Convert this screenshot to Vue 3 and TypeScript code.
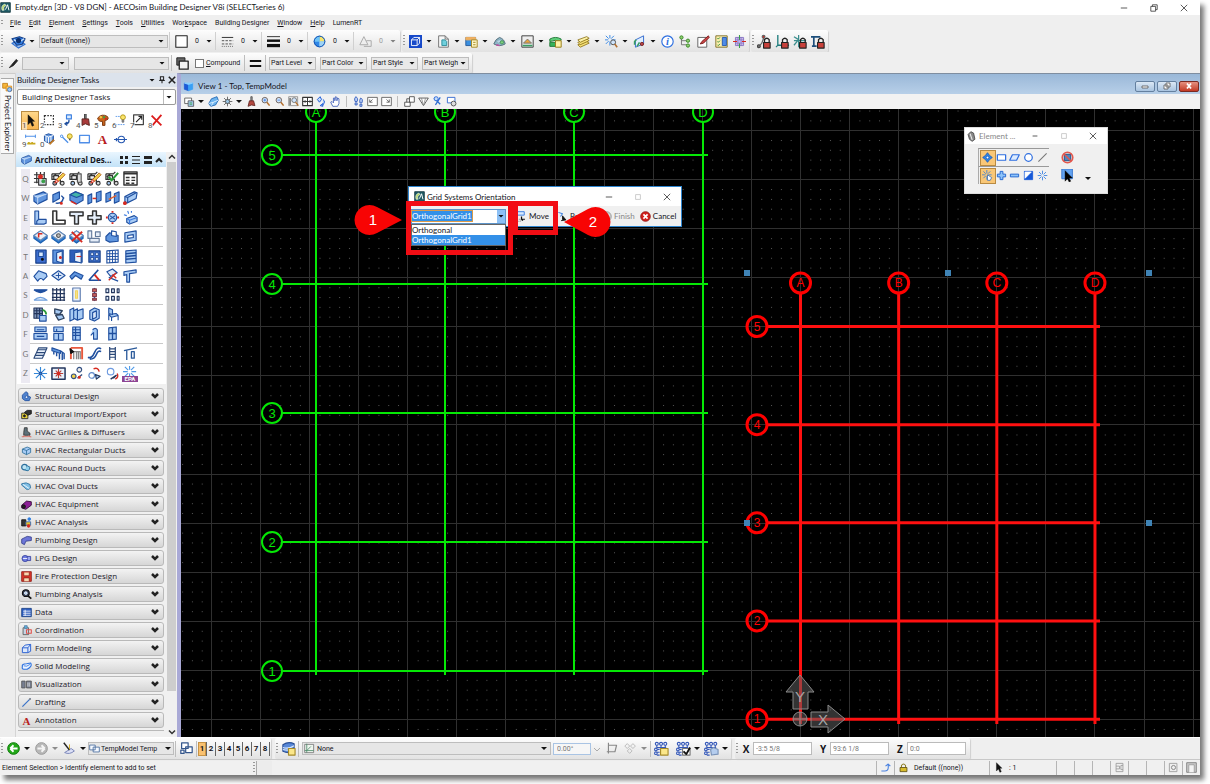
<script setup lang="ts">
import { h } from 'vue'

const B = '#1f4f9f'
const L = '#a8cbf4'
const M = '#5f95de'
const K = '#333333'
const R = '#d62a20'
const G = '#3aa04a'
const Y = '#f3d34a'

const p = (d: string, f = 'none', s = B, w = 1.2) =>
  `<path d="${d}" fill="${f}" stroke="${s}" stroke-width="${w}" stroke-linejoin="round"/>`
const c = (x: number, y: number, r: number, f = 'none', s = B, w = 1.2) =>
  `<circle cx="${x}" cy="${y}" r="${r}" fill="${f}" stroke="${s}" stroke-width="${w}"/>`
const gridMarks = p('M1 4H12M1 8H12M1 12H12M4 1V13M8 1V13M12 1V13', 'none', K, 1.3)
const pencil = p('M4 13L6 9 13 2 15 4 8 11Z', Y, '#b5641d', 1) + p('M4 13L6 9 8 11Z', '#fff', R, 1)
const burst = (s: string, x = 8, y = 8) =>
  `<g transform="translate(${x - 8} ${y - 8})">` +
  p('M8 1V6M8 10V15M1 8H6M10 8H15M3 3L6.5 6.5M9.5 9.5L13 13M13 3L9.5 6.5M6.5 9.5L3 13', 'none', s, 1.2) + '</g>'
const lock = p('M8 9V6Q10.500 3 13 6V9', 'none', '#222', 1.4) + p('M7 9H14V15H7Z', '#c8403a', '#222', 1.2)
const lens = c(7, 6, 4, '#cfe4fb', '#6a5b55', 1.3) + p('M10 9L14 14', 'none', '#b3702f', 2.2)
const cut = p('M1 3H9L11 1M2 6L6 3M1 3V9H10V14M3 9V5H8V9', '#f0f0f0', K, 1.3) + c(4, 13, 2, L, K) + c(12, 13, 2, '#ddd', K)
const wall = p('M1 6L11 2 15 4V10L5 15 1 12Z', M) + p('M1 6L5 8 15 4M5 8V15', L, '#dceafc', 0.8)
const duct = p('M2 6L9 3 14 5V11L8 14 2 11Z', L, '#2d6f9c') + p('M2 6L8 8 14 5M8 8V14', 'none', '#2d6f9c')
const plate = p('M1 7L8 2 15 7V10L8 15 1 10Z', '#2b7ad0', '#1d5fae') + p('M1 7L8 2 15 7 8 12Z', '#eef3fa', '#6e8fb8')
const chain = c(3, 3, 1.6, '#fff', '#3558b8') + c(7.500, 3, 1.6, '#fff', '#3558b8') + c(12, 3, 1.6, '#fff', '#3558b8') +
  p('M3 5V7H13M7.500 5V7M12 5V7M3 9H6M3 12H6M3 15H6', 'none', '#3558b8') + c(2, 9, 1.4, '#fff', '#3558b8') +
  c(2, 13, 1.4, '#fff', '#3558b8')

const ICONS: Record<string, string> = {
  app: p('M1 1H15V15H1Z', '#1f5c66', '#15383f') + p('M3 12Q1 5 7 3L9 5Q4 7 6 12Z', '#b5d66a', '#fff', 0.8) + p('M8 11L11 4 13 12', 'none', '#fff', 1.4),
  level: p('M1 10L8 15 15 11 8 7Z', '#9fc3f2', '#2f6fd0') + p('M1 5L9 3 15 5 12 11 6 12Z', '#2f7be0', '#173f86') + p('M3 6L8 9 14 5', 'none', '#cfe4fb', 1.4) + c(8, 7, 2.200, '#0b2f6d', '#0b2f6d'),
  square: p('M1 1H15V15H1Z', '#fff', '#222', 1.3),
  style: p('M1 3H15', 'none', K, 1.2) + '<path d="M1 7H15M1 11H15" stroke="#333" stroke-dasharray="3 1.500"/>' + '<path d="M1 14H15" stroke="#333" stroke-dasharray="1 1.500"/>',
  weight: '<path d="M0 2H16" stroke="#111"/><path d="M0 7H16" stroke="#111" stroke-width="3"/><path d="M0 13H16" stroke="#111" stroke-width="4"/>',
  globe: c(8, 8, 6.500, '#2f86e6', '#1558b8') + p('M8 8V1.500A6.500 6.500 0 0 1 14.500 8Z', '#f6e36a', '#f6e36a', 0.5) + p('M8 8H14.500A6.500 6.500 0 0 1 8 14.500Z', '#9ed3f6', '#9ed3f6', 0.5) + p('M8 8H1.500A6.500 6.500 0 0 1 8 1.500Z', '#6fc3f6', '#6fc3f6', 0.5) + c(8, 8, 6.500, 'none', '#1558b8', 1.2),
  shape: p('M1 12L6 2 11 12Z', '#eee', '#aaa') + p('M6 14H15V7H9', 'none', '#aaa'),
  cube: p('M0 0H16V16H0Z', '#1749c9', '#1749c9') + p('M3 6H10V13H3ZM3 6L6 3H13V10L10 13M10 6L13 3', 'none', '#fff', 1.1),
  page: p('M2 1H10L14 5V15H2Z', '#f7f7f7', '#777') + p('M6 6H10L12 8V13H6Z', '#6fd0dd', '#2f8e9c') + p('M10 1V5H14', 'none', '#777'),
  views: p('M1 3H13V13H1Z', '#3a8fe0', '#2c5f9e') + p('M1 3H13V6H1Z', '#f0b060', '#f0b060') + p('M8 6H15V15H8Z', '#fff8c8', '#a58a2a') + p('M10 9H13M10 12H13', 'none', '#a58a2a'),
  solid: p('M1 11Q3 5 8 3Q14 5 15 11Q8 15 1 11Z', '#8fb6c8', '#55707c') + p('M4 8Q8 4 11 7L7 10Z', '#b4d4e4', '#7d9cab', 0.6) + p('M4 12L8 13', 'none', '#c04ca0', 1.6) + c(11, 9, 2, '#7fd07f', '#4b9a5b'),
  raster: p('M1 1H15V15H1Z', '#eee', '#444') + p('M3 10L8 5 13 10H3Z', '#e9a33a', '#777') + p('M2 13H14', 'none', '#3a9d63', 2),
  cloud: p('M1 5Q8 1 15 5L14 8Q8 5 1 8Z', '#5fd07a', '#247a3a') + p('M1 9H10V14H1Z', '#36b35a', '#247a3a') + p('M8 7H15V15H8Z', '#fff3a8', '#9a7e1d'),
  layers: p('M1 12L12 8 15 10 4 15Z', '#f7e27a', '#8a7015', 1) + p('M1 9L12 5 15 7 4 12Z', '#f7e27a', '#8a7015', 1) + p('M1 6L12 2 15 4 4 9Z', '#fdf2a8', '#8a7015', 1),
  sparkLens: burst('#3c8be6', 6, 6) + c(10, 9, 3, '#cfe4fb', '#555') + p('M12 11L15 15', 'none', '#b3702f', 2),
  fence: p('M3 6L13 1V11L3 15Z', '#e1effe', '#3a6fd0') + p('M2 12V8L4 6M5 14L8 9', 'none', '#3a9d63', 2) + c(11, 11, 2, '#b8484a', '#7d2a2a'),
  info: c(8, 8, 7, '#fff', '#2d6fe0', 1.4) + '<text x="8" y="12.500" text-anchor="middle" font-family="Liberation Serif, serif" font-style="italic" font-weight="bold" font-size="13" fill="#2d6fe0">i</text>',
  tree: p('M3 4V12H10M3 7H9', 'none', '#777') + c(3, 3, 2, '#8fd070', '#3d8a2a') + c(11, 7, 2, '#8fd070', '#3d8a2a') + c(11, 13, 2, '#8fd070', '#3d8a2a'),
  markup: p('M1 3H12V15H1Z', '#fff', '#666') + p('M4 11L6 8 14 1 15 3 8 10Z', '#d04848', '#7d1f1f'),
  props: p('M1 1H15V15H1Z', '#fdf0ad', '#867531') + p('M9 3H14V13H9Z', '#4f8ce8', '#2a5bb0') + p('M3 4L4 5 6 3M3 8L4 9 6 7M3 12L4 13 6 11', 'none', '#2d8a3a'),
  snapgrid: p('M3 3H13V13H3Z', '#c9b8ee', '#8d7bc4') + p('M8 0V6M8 10V16', 'none', '#3aa04a', 1.3) + p('M0 8H5M11 8H16', 'none', R, 1.5) + p('M3 6H13M3 10H13M6 3V13M10 3V13', 'none', '#7a68b8', 0.7),
  lockA: p('M1 14L5 10M8 2L5 10', 'none', '#666', 1.4) + c(2, 13, 1.500, '#777', '#444') + c(7, 3, 1.500, R, '#666') + lock,
  lockB: p('M3 1V12H15', 'none', '#1d7c7c', 1.4) + p('M1 14L3 12', 'none', '#1d7c7c') + lock,
  lockC: p('M1 3L6 6M1 12L6 6M6 1V14M1 7H14', 'none', '#3a8d8d', 1.3) + lock,
  lockD: p('M0 3H10M3 3V13M1 13H6', 'none', '#1d4f7c', 1.8) + lock,
  pen: p('M2 14L6 9 12 2 14 4 8 11Z', '#222', '#222'),
  stack: p('M1 1H11V10H1Z', '#666', '#222') + p('M4 5H15V15H4Z', '#f1f1f1', '#222', 1.600),
  equal: '<path d="M1 5H15M1 11H15" stroke="#111" stroke-width="2.500"/>',
  viewIcon: p('M2 3L8 5V14L2 12Z', '#1c5bd6', '#1c5bd6') + p('M8 5L14 3V12L8 14Z', '#39a0f5', '#39a0f5') + p('M2 3H14L8 5Z', '#8ad0ff', '#8ad0ff'),
  vAttr: p('M1 3H11V11H1Z', '#fff', '#555') + p('M6 7H14V15H6Z', '#a8cbf4', '#555') + p('M8 10H12M8 12H12', 'none', G),
  vDisp: p('M1 11L5 4 13 1 15 6 11 13 4 15Z', '#6db4ee', '#1c62b0') + p('M1 11L8 9 15 6M8 9L5 14', 'none', '#e7f4ff'),
  sun: burst('#555') + c(8, 8, 3, '#9dc8e6', '#444'),
  brush: p('M7 1H9V7H7Z', '#999', '#555') + p('M5 7H11L13 14 8 13 3 15Z', '#b3483f', '#5d2622'),
  zoomIn: lens + p('M5 6H9M7 4V8', 'none', '#2d6fe0', 1),
  zoomOut: lens + p('M5 6H9', 'none', '#2d6fe0', 1),
  zoomWin: p('M1 1H14V14H1Z', 'none', '#777', 1) + c(9, 6, 3.500, '#cfe4fb', '#666') + p('M11 9L15 14', 'none', '#b3702f', 2) + p('M3 3V13', 'none', K, 1.5),
  fit: p('M1 2H15V14H1Z', '#fff', K, 1.6) + p('M1 8H15M8 2V14', 'none', K, 1.4) + p('M5 6L3 8 5 10M11 6L13 8 11 10', 'none', K),
  rotate: p('M6 1L2 5 5 9 8 5ZM10 5Q15 8 9 14M6 14L10 11V15Z', '#c5ddfa', '#1c5bd6', 1.4),
  hand: p('M4 15L1 9 3 8 5 10V3L7 3V7L8 1 10 2V7L11 3 13 4V11L11 15Z', '#fff', '#3b5bb8'),
  walk: p('M4 1Q8 3 6 8H3Q1 4 4 1ZM3 10H6V13H3ZM11 3Q15 4 13 10H10Q9 6 11 3ZM10 12H13V15H10Z', '#bcd0f6', '#2b55b8'),
  prev: p('M1 2H15V14H1Z', '#fff', '#555') + p('M4 5V9H8M4 9L8 5', 'none', '#555'),
  next: p('M1 2H15V14H1Z', '#fff', '#555') + p('M12 5V9H8M12 9L8 5', 'none', '#555'),
  copyview: p('M8 1H15V9H8ZM1 9H9V15H1Z', '#fff', '#444') + p('M4 9V4H8', 'none', '#444'),
  clip: p('M1 3H15L8 14Z', '#fff', '#444') + p('M5 3L8 14 11 3', 'none', '#888'),
  clipRun: p('M3 3L12 12M12 2L5 13', 'none', '#2b6bd0', 1.800) + c(6, 4, 3, '#c5ddfa', '#1c5bd6'),
  clipSet: p('M2 2H13V10H2Z', '#fff', '#3b6fd0', 1.4) + c(11, 11, 3.500, '#ddd', '#444'),
  arrow: p('M5 1V13L8 10 10 15 12 14 10 9H13Z', '#111', '#111', 0.6),
  marquee: '<path d="M3 2H14V13H3Z" fill="none" stroke="#333" stroke-width="1.500" stroke-dasharray="2 1.500"/>',
  manip: p('M8 1H14V6H8Z', '#d9ebff', '#3b7fe0', 1.4) + p('M11 7V9Q11 12 7 12M9 10L6 12 9 14', 'none', '#1f4f9f', 1.6),
  moveTo: p('M1 1H12V6H1Z', '#d9ebff', '#3b7fe0', 1.4) + p('M8 8V12H13M10 14L8 12', 'none', '#111', 1.8) + '<path d="M1 12H7V15H1Z" fill="none" stroke="#777" stroke-dasharray="2 1"/>',
  brush2: p('M8 0H10V6H8Z', '#888', '#444') + p('M5 6H13L14 14 9 12 5 14Z', '#a83a3a', '#5d2622'),
  palette: p('M2 5Q7 -1 14 3Q17 7 11 8V14H8V9Q3 10 2 5Z', '#c8641d', '#7d3b10') + c(6, 4, 1, Y, Y) + c(10, 4, 1, G, G) + c(12, 6, 1, R, R),
  bulb: '<path d="M2 3H7M2 13H7M8 13H14" stroke="#4a8ee8" stroke-dasharray="2 1"/>' + c(11, 4, 3, '#fbe46a', '#b59a1d') + p('M10 7V10H12V7', '#777', '#777'),
  scale: p('M2 1H14V13H2Z', '#fff', '#444', 1.5) + p('M5 10L12 3M8 3H12V7', 'none', '#222', 1.4),
  del: p('M2 2L14 14M14 1L3 14', 'none', '#dc1c1c', 2.2),
  measure: p('M2 4H14M2 2V6M14 2V6', 'none', '#4a8ee8') + p('M4 13H14M6 11V13M10 11V13', 'none', '#c8a81d', 2),
  modify: p('M3 3L8 1 14 3V10L8 12 3 10Z', M) + p('M3 3L8 5 14 3M8 5V12M5 5V11M11 4V11', 'none', '#fff') + p('M9 13L14 8 15 9 10 14Z', '#e79b2c', '#a35d12'),
  line: p('M2 4L10 12', 'none', '#4a8ee8', 1.500) + c(2, 4, 1.500, '#fff', '#4a8ee8') + c(12, 4, 3, '#fbe46a', '#b59a1d') + p('M11 8H13', 'none', '#555', 2),
  rect: p('M2 3H14V12H2Z', '#fff', '#4f8ee8', 1.6),
  letterA: '<text x="8" y="14" text-anchor="middle" font-family="Liberation Serif, serif" font-weight="bold" font-size="16" fill="#b8201d">A</text>',
  dim: c(9, 8, 4, '#fff', '#2456b0', 1.4) + p('M0 8H16M3 6V10', 'none', '#2456b0', 1.4),
  ac1: gridMarks + p('M6 8H14V15H6Z', '#d8dde6', K) + c(8, 6, 2, R, R) + c(11, 11, 1.5, G, G), ac2: cut + pencil, ac3: cut + p('M9 3H13V12H9Z', '#ddd', '#555'),
  ac4: cut + pencil, ac5: cut + p('M4 6L7 10 14 2', 'none', '#2b9a38', 2.2),
  ac6: p('M1 1H15V15H1Z', '#fff', K, 1.5) + p('M1 3H15M3 7H7M9 7H13M3 10H7M9 10H13M3 13H7M9 13H12', 'none', K, 1.5),
  w1: wall, w2: p('M2 5L9 2V9L2 13Z', M) + p('M5 14Q12 15 13 9M11 6L14 9', 'none', B, 1.5) + c(11, 14, 1, R, R),
  w3: p('M1 5L7 2 15 5V11L8 15 1 11Z', M) + p('M1 5L8 8 15 5 7 2Z', '#43b4a9', '#1f4f9f') + p('M2 12L8 15', 'none', R, 1.5),
  w4: p('M1 6L5 4V13L1 15ZM10 3L15 1V11L10 13Z', M) + p('M6 9H10', 'none', R, 1.6),
  w5: p('M1 4L6 2V11L1 13ZM10 4L15 2V12L10 14Z', M) + p('M4 10L12 6', 'none', '#e2602c', 1.500),
  w6: p('M2 7L12 2 15 3 14 9 4 14 2 12Z', L) + p('M2 7L5 8 14 3M5 8L5 13', 'none', B) + c(2, 14, 1.4, R, R),
  e1: p('M2 1H6V10H14V14L12 15H2Z', L) + p('M6 10L4 12V15', 'none', B), e2: p('M2 1H6V11H15V15H2Z', '#fff', K, 1.7),
  e3: p('M1 2H15V6H10V15H6V6H1Z', '#e5effb', K, 1.6), e4: p('M6 1H10V6H15V10H10V15H6V10H1V6H6Z', '#e5effb', K, 1.6),
  e5: c(8, 8, 4.500, L, B) + p('M5 6L11 10M5 10L11 6', 'none', B) + p('M8 1V3M8 13V15M1 8H3M13 8H15', 'none', R, 2),
  e6: p('M4 9L12 6 15 8V12L7 15 4 13Z', L) + p('M4 9L7 11 15 8M7 11V15M1 5L4 6M5 1L6 4M9 1V3', 'none', '#3b7be0', 1.2),
  r1: plate + p('M6 9V5H10', 'none', R, 1.6), r2: plate + c(8, 7, 2, '#bbb', '#555'), r3: plate + p('M3 3L14 14M14 3L3 13', 'none', R, 2),
  r4: p('M1 2H5V10H1ZM9 3H14V8H9ZM3 10H13V14H3Z', '#e5edf8', '#637a9c'),
  r5: p('M1 8L5 4 14 7V13L5 14 1 12Z', M) + p('M7 2L12 3V8L7 7Z', '#fff'), r6: p('M2 4L14 2V12L2 14Z', L) + p('M5 7L11 6V9L5 10Z', '#fff'),
  t1: p('M3 1H14V15H3Z', '#3d6fd0', '#173f86') + p('M6 3H11V8H6Z', '#d9e9fc') + c(10, 11, 1, '#111', '#111'),
  t2: p('M2 1H13V15H2Z', M) + p('M6 4L12 2V15L6 13Z', '#eaf2fc') + c(10, 9, 1, R, R), t3: p('M1 1H14V14H1Z', '#2c5cb8') + p('M6 4L13 3V15L6 13Z', '#eaf2fc') + p('M8 8H13', 'none', R),
  t4: p('M2 2H14V14H2Z', '#3f74d4', '#173f86') + p('M4 4H7V7H4ZM9 4H12V7H9ZM4 9H7V12H4ZM9 9H12V12H9Z', '#e0ecfb', '#173f86', 0.8),
  t5: p('M2 2L14 1V14L2 15Z', '#fff') + p('M2 5H14M2 8H14M2 11H14M5 2V15M8 2V15M11 2V15', 'none', B, 1),
  t6: p('M3 2L14 1V14L3 15Z', L) + p('M3 5L14 4M3 8L14 7M3 11L14 10', 'none', B, 1.5),
  a1: p('M1 9L6 3 14 6 15 9 11 13Q8 9 5 14Z', L), a2: p('M1 8L8 3 15 8 8 13Z', '#dce9fa') + p('M5 8H11M8 5V11', 'none', B, 1),
  a3: p('M1 9L6 4 15 8 13 12 7 8 3 12Z', M), a4: p('M2 13L12 2M2 13H15', 'none', B, 1.6) + p('M8 7L13 13', 'none', R, 2),
  a5: p('M2 4L8 1 13 5 6 9ZM4 10L14 14', '#dce9fa') + p('M8 7L12 11M12 5L4 13', 'none', R, 1.5), a6: p('M1 4L14 2V5L7 6V15H4V7L1 8Z', L),
  s1: p('M1 3H15Q8 9 1 3', B) + p('M1 14H15Q8 8 1 14', '#e9f2fc', '#6f9fdc'), s2: p('M2 1V15M6 1V15M10 1V15M14 1V15M1 3H15M1 7H15M1 11H15M1 14H15', 'none', '#24365c', 1.3),
  s3: p('M4 1H12V15H4Z', '#e8f0fb', '#5f7cb0') + p('M7 4H9V12H7Z', '#f9e79a', '#f0d460'), s4: p('M8 1V15', 'none', B, 1.5) + p('M6 2H10V5H6ZM6 7H10V10H6ZM6 12H10V14H6Z', '#d96a5e', '#7f3a4a'),
  s5: p('M1 2H4V6H1ZM7 2H10V6H7ZM13 2H15V6H13ZM1 10H4V14H1ZM7 10H10V14H7ZM13 10H15V14H13Z', '#dce9fa', '#24365c'),
  d1: p('M1 1H10V12H1Z', '#7d93b8', '#24365c') + p('M1 4H10M1 7H10M4 1V12M7 1V12', 'none', '#24365c') + p('M7 9H14V15H7Z', L) + p('M10 3Q14 4 14 8', 'none', '#2b9a38', 2), d2: p('M4 2L12 4 9 8 4 7ZM5 9L12 8 14 12 8 14Z', L, '#30435f', 1.4),
  d3: p('M1 3L5 1V13L1 15ZM5 4L9 2V14L5 12ZM9 4L15 2V12L9 14Z', L), d4: p('M3 4L8 1 13 3V12L8 15 3 13Z', L) + p('M6 6L10 4V11L6 13Z', '#dceafc', B),
  d5: p('M4 1L8 3V8L4 7ZM4 8L12 7 14 9 7 11ZM4 8V14M14 9V14M7 11V15', L),
  f1: p('M2 1H14V6H2ZM1 8H15V14H1Z', L) + p('M4 4H12M4 11H12', 'none', B), f2: p('M3 1H13V6H3ZM3 8H13V15H3Z', L) + p('M8 8V15M6 3V6', 'none', B),
  f3: p('M4 1H12V15H4Z', L) + p('M4 4H12M4 7H12M4 10H12M7 1V15', 'none', B, 1.3), f4: p('M6 4Q9 1 11 4V14H7V7L4 10', L), f5: p('M4 2L12 1V14L4 15Z', L) + p('M8 2V14M4 8H12', 'none', B, 1.4),
  g1: p('M1 13L6 2H15L10 13Z', '#eaf2fc', '#2b4878') + p('M2 10H12M4 7H13M5 4H14', 'none', '#2b4878'), g2: p('M1 2L10 5V8L1 5Z', M) + p('M3 6V9M6 7V11M9 8V14M12 6V15M10 5L14 8V14', 'none', B, 1.5),
  g3: p('M2 2H14V14', 'none', '#e8583c', 2) + p('M2 2V14', 'none', '#e8583c', 2) + p('M5 6H12V14M5 6V14M8 6V14M10 6V14', 'none', '#888', 1.4) + p('M1 3L5 6 2 8Z', '#111', '#111'), g4: p('M1 12Q5 14 8 7T15 3M3 14Q8 14 10 9T15 6', 'none', B, 1.7),
  g5: p('M5 1V15M11 1V15M5 3H11M5 6H11M5 9H11M5 12H11', 'none', '#2b4878', 1.3), g6: p('M1 5L15 2M4 5V15M9 6H12V13H9Z', 'none', '#2b5a9a', 1.4),
  z1: burst('#2f86d8') + c(8, 8, 1.500, '#2f86d8'), z2: p('M1 2H15V14H1Z', '#e9f2fc', '#24365c', 1.6) + p('M8 3V13M3 8H13M5 5L11 11M11 5L5 11', 'none', '#b5423a') + c(8, 8, 1.500, R, R),
  z3: c(5, 11, 2.500, Y, '#334f80') + c(11, 4, 2.500, '#eee', '#334f80') + p('M9 13L14 9', 'none', '#334f80', 1.4) + c(11, 12, 1, R, R), z4: c(5, 10, 3, '#fff', '#5d86c8') + p('M9 9L14 11 10 14Z', L, '#24365c') + p('M7 3Q12 1 13 6', 'none', R, 1.5),
  z5: c(6, 6, 3.500, '#fff', '#6d9ae0') + p('M6 14L12 10 9 13', 'none', '#24365c', 1.5) + p('M13 8Q15 12 11 14', 'none', R, 1.5), z6: burst('#4f9ae8', 7, 6),
  a_arch: wall, a_sd: p('M2 6L7 1 10 3V7L14 9 12 14 6 14 2 11Z', '#4f83cf') + c(8, 9, 2, '#dceafc', B), a_sie: p('M1 6H10V14H1Z', '#e7d23a', '#222') + p('M5 5L9 2H15V7L10 9Z', '#333', '#111') + c(5, 10, 1.500, '#222', '#222'),
  a_hg: p('M5 1H9V6L13 9V12H4V8Z', '#5d7079', '#333') + p('M1 14H15M5 12L3 15M11 12L14 15', 'none', '#d8746a', 1.3), a_hr: duct, a_hro: c(5, 6, 4, '#bfe4f2', '#2d6f9c', 1.8) + p('M6 10Q12 14 13 6L9 4', '#8fd0ec', '#2d6f9c', 1.4),
  a_ho: p('M1 4Q8 1 13 5L14 10Q9 15 6 10L1 6Z', '#82c0e6', '#2d6f9c') + p('M3 5L12 11', 'none', '#fff'), a_he: p('M1 9L8 3 15 4V9L7 15 1 13Z', '#8c1f96', '#2d0932') + c(4, 11, 2.500, '#222', '#111'),
  a_ha: p('M1 4H7V13H1Z', '#333', '#111') + p('M7 7H14V12H7Z', '#e8c12c', '#2b62b8') + c(12, 3, 2, '#2f7fe0', '#2f7fe0') + c(11, 13, 2, R, R), a_pd: p('M1 6L9 2 15 3V8L7 9 5 14 1 12Z', '#6d76d8', '#333d8c'),
  a_lpg: c(6, 8, 4.500, '#6d7be0', '#333d9c') + p('M9 5H14V11H9Z', '#99a3f0', '#333d9c') + p('M3 8H9', 'none', '#fff'), a_fp: p('M1 1H15V15H1Z', '#e0382c', '#8c1710') + p('M4 2V7H12V2M4 15V10H12V15', '#f8d7b0', '#7d1710', 1),
  a_pa: c(7, 6, 5, '#333d54', '#111', 1.6) + c(7, 6, 2, '#9fc4ee', '#fff') + p('M10 10L15 14', 'none', '#111', 2.500), a_da: p('M1 2H15V14H1Z', '#2f5fc0', '#173f86') + p('M3 6H14M3 9H14M3 12H14M6 4V13', 'none', '#fff'),
  a_co: p('M3 4H11V14H3Z', '#c5d5e3', '#555') + p('M8 7H15V12H8Z', 'none', '#e0504a', 1.5) + p('M5 1H9V5H5Z', '#5ab0e0', '#5a7fa0'), a_fm: p('M2 7L6 3 14 2V12L10 14H2Z', '#dce9fc', '#2d62d0', 1.4) + p('M2 7H10V14M10 7L14 2', 'none', '#2d62d0', 1.4),
  a_sm: p('M2 8Q1 4 8 4L14 3Q17 8 9 12H4Q1 12 2 8Z', '#eaf3ff', '#2d72e0', 1.6) + p('M4 7Q8 9 13 5', 'none', '#2d72e0'), a_vi: p('M1 3H6V13H1ZM8 3H15V13H8Z', '#777f92', '#555') + p('M10 5V11M12 5V11', 'none', '#ddd'),
  a_dr: p('M2 14L14 2', 'none', '#3a73c8', 1.8) + c(13, 3, 1, '#888', '#888'), back: c(8, 8, 7.200, '#22a818', '#0f7a0c') + p('M4 8L8 4M4 8L8 12M4 8H13', 'none', '#fff', 2.200), fwd: c(8, 8, 7.200, '#b8b8b8', '#999') + p('M12 8L8 4M12 8L8 12M12 8H3', 'none', '#f4f4f4', 2.200),
  mode: p('M2 13Q8 16 14 11L10 8Z', '#dce0f6', '#7a86b8') + p('M1 1L8 10', 'none', '#222', 1.800) + p('M8 3V9', 'none', '#d6b22a'),
  model: p('M1 3H9V10H1ZM6 6H15V13H6Z', '#f5f9ff', '#456a9c', 1.2), windows: p('M2 1H10V8H2ZM7 6H15V13H7ZM1 10H5V14H1Z', '#fff', '#34568c', 1.5), db: p('M2 4Q8 0 14 3V11Q8 14 2 11Z', '#5788d8', '#2a4f94') + p('M2 7Q8 9 14 5M2 9Q8 11 14 8', 'none', '#dce9fa') + p('M8 8H15V15H8Z', '#fbe78a', '#a58a2a'),
  acs: p('M1 2H14V14H1Z', '#eef5ee', '#777') + p('M4 1V14M1 11H14M4 11L10 5', 'none', '#4c8a6a'), gray1: p('M3 1V14M3 4H13L11 12H1', 'none', '#888', 1.4), gray2: p('M4 2L7 5 4 8 1 5ZM11 2L14 5 11 8 8 5ZM7 8L10 11 7 14 4 11Z', 'none', '#bbb'),
  ch1: chain + p('M7 8H15V15H7Z', '#fbe78a', '#a58a2a'), ch2: chain + p('M7 8H15V15H7Z', '#fff', '#777') + p('M8 11L11 14 15 7', 'none', '#111', 2), ch3: chain + p('M7 9L10 7 15 9V14L8 15Z', '#b5cdee', '#7a93b8'),
  snap: p('M2 13H7Q12 13 12 8V4M8 6L12 3 15 6', 'none', '#4a82e0', 1.6), padlock: p('M5 8V5Q8 1 11 5V8', 'none', '#8a7a20', 1.5) + p('M3 8H13V14H3Z', '#d8bc2c', '#5c4c10'), doc: p('M3 2H13V14H3ZM3 6H8V10H3M13 5H10V11H13', 'none', '#999'), disk: p('M2 2H13V14H2Z', '#eee', '#999') + c(8, 8, 3, 'none', '#777'), person: p('M1 1H15V15H1Z', '#ccc', '#777') + p('M4 15V4H12V15', '#f3f3f3', '#999'),
  elem: p('M3 5L7 1 11 3 13 12 9 15 5 12Z', '#888', '#444') + p('M6 4L9 13', 'none', '#eee', 1.5), pAll: p('M8 1L11 5 15 8 11 11 8 15 5 11 1 8 5 5Z', '#2f86e6', '#1558b8') + c(8, 8, 2, '#fff', '#1558b8'), pRect: p('M2 4H14V12H2Z', '#fff', '#2f6fe0', 1.800), pPara: p('M1 12L5 4H15L11 12Z', '#dcebff', '#2f6fe0', 1.800), pCirc: c(8, 8, 5.500, '#fff', '#2f6fe0', 1.800), pLine: p('M2 14L14 2', 'none', '#777', 1.600),
  pInd: burst('#3a7fd8', 7, 7) + p('M8 7L14 11 12 15H8Z', '#fff', '#3a6fb8'), pPlus: p('M6 2H10V6H14V10H10V14H6V10H2V6H6Z', '#8ec4fa', '#2468d0', 1.4), pMinus: p('M2 6H14V10H2Z', '#8ec4fa', '#2468d0', 1.4), pInv: p('M2 2H14V14H2Z', '#1558d8', '#1558d8') + p('M3 3H12L3 12Z', '#fff', '#fff'), pBurst: burst('#2f7be0'), pNo: p('M4 4H12V12H4Z', '#4f86c0', '#224c80') + c(8, 8, 6.500, 'none', '#e4574c', 2) + p('M4 4L12 12', 'none', '#e4574c', 1.8),
  pSel: p('M1 0H14V12H1Z', '#62a3f2', '#3a78d0') + p('M5 2V15L8 12 10 16 12 15 10 11H14Z', '#000', '#000', 0.5), rot: p('M2 2L8 4 5 8', 'none', '#3b7fe0', 1.5) + p('M6 14L13 13 8 7V12', '#111', '#111'), cancel: c(8, 8, 7, '#d3201c', '#8f1512') + p('M5 5L11 11M11 5L5 11', 'none', '#fff', 2.400), ok: c(8, 8, 7, '#c8c8c8', '#999') + p('M4 8L7 11 12 5', 'none', '#fff', 2),
  explorer: p('M1 2H8V9H1Z', '#f5b63a', '#c07c12') + p('M6 6H14V13H6Z', '#ffd36a', '#d9871a') + c(11, 11, 3, '#9dc8f6', '#3a6fb8'),
}

const Icon = (props: { n: string }) =>
  h('svg', { class: 'ic', viewBox: '0 0 16 16', 'aria-hidden': 'true', innerHTML: ICONS[props.n] ?? '' })

const menus = ['File', 'Edit', 'Element', 'Settings', 'Tools', 'Utilities', 'Workspace', 'Building Designer', 'Window', 'Help', 'LumenRT']
const hot: Record<string, number> = { Workspace: 3, LumenRT: -1, 'Building Designer': -1 }
const menuParts = menus.map((m) => {
  const i = hot[m] ?? 0
  return i < 0 ? [m, '', ''] : [m.slice(0, i), m[i], m.slice(i + 1)]
})
const attrs = ['square', 'style', 'weight', 'globe', 'shape']
const primary = ['cube', 'page', 'views', 'solid', 'raster', 'cloud', 'layers', 'sparkLens', 'fence']
const extra = ['info', 'tree', 'markup', 'props', 'snapgrid']
const locks = ['lockA', 'lockB', 'lockC', 'lockD']
const parts = ['Part Level', 'Part Color', 'Part Style', 'Part Weigh']
const main = ['arrow', 'marquee', 'manip', 'brush2', 'palette', 'bulb', 'scale', 'del', 'measure', 'modify', 'line', 'rect', 'letterA', 'dim']
const rows = [
  { k: 'Q', i: ['ac1', 'ac2', 'ac3', 'ac4', 'ac5', 'ac6'] },
  { k: 'W', i: ['w1', 'w2', 'w3', 'w4', 'w5', 'w6'] },
  { k: 'E', i: ['e1', 'e2', 'e3', 'e4', 'e5', 'e6'] },
  { k: 'R', i: ['r1', 'r2', 'r3', 'r4', 'r5', 'r6'] },
  { k: 'T', i: ['t1', 't2', 't3', 't4', 't5', 't6'] },
  { k: 'A', i: ['a1', 'a2', 'a3', 'a4', 'a5', 'a6'] },
  { k: 'S', i: ['s1', 's2', 's3', 's4', 's5'] },
  { k: 'D', i: ['d1', 'd2', 'd3', 'd4', 'd5'] },
  { k: 'F', i: ['f1', 'f2', 'f3', 'f4', 'f5'] },
  { k: 'G', i: ['g1', 'g2', 'g3', 'g4', 'g5', 'g6'] },
  { k: 'Z', i: ['z1', 'z2', 'z3', 'z4', 'z5', 'z6'] },
]
const tasks: [string, string][] = [
  ['a_sd', 'Structural Design'], ['a_sie', 'Structural Import/Export'], ['a_hg', 'HVAC Grilles & Diffusers'],
  ['a_hr', 'HVAC Rectangular Ducts'], ['a_hro', 'HVAC Round Ducts'], ['a_ho', 'HVAC Oval Ducts'],
  ['a_he', 'HVAC Equipment'], ['a_ha', 'HVAC Analysis'], ['a_pd', 'Plumbing Design'], ['a_lpg', 'LPG Design'],
  ['a_fp', 'Fire Protection Design'], ['a_pa', 'Plumbing Analysis'], ['a_da', 'Data'], ['a_co', 'Coordination'],
  ['a_fm', 'Form Modeling'], ['a_sm', 'Solid Modeling'], ['a_vi', 'Visualization'], ['a_dr', 'Drafting'], ['letterA', 'Annotation'],
]
const viewTools: string[][] = [
  ['vAttr', '>', 'vDisp', 'sun', '>', 'brush', 'zoomIn', 'zoomOut', 'zoomWin', 'fit', 'rotate', 'hand'],
  ['walk', 'prev', 'next'],
  ['copyview', 'clip', 'clipRun', 'clipSet'],
]
const palA = ['pAll', 'pRect', 'pPara', 'pCirc', 'pLine']
const palB = ['pInd', 'pPlus', 'pMinus', 'pInv', 'pBurst']
const coords = [['X', '-3:5 5/8'], ['Y', '93:6 1/8'], ['Z', '0:0']]

const letters = ['A', 'B', 'C', 'D']
const nums = ['5', '4', '3', '2', '1']
const step = 49.08
const green = {
  cols: letters.map((t, i) => ({ t, x: 135 + 129 * i })),
  rows: nums.map((t, i) => ({ t, y: 46 + 129 * i })),
}
const red = {
  cols: letters.map((t, i) => ({ t, x: 619.5 + 2 * step * i })),
  rows: nums.map((t, i) => ({ t, y: 217.5 + 2 * step * i })),
}
const dots: [number, number][] = []
for (let a = 1; a < 5; a++) for (let b = 1; b < 5; b++) dots.push([(a * step) / 5, (b * step) / 5])
const handles = [[566, 164], [767, 164], [968, 164], [566, 414], [968, 414]]
</script>

<template>
  <div class="page">
    <div class="window">
      <header class="titlebar">
        <Icon n="app" />
        <h1>Empty.dgn [3D - V8 DGN] - AECOsim Building Designer V8i (SELECTseries 6)</h1>
        <div class="caption">
          <button aria-label="Minimize"><svg viewBox="0 0 10 10"><path d="M1 5H9" /></svg></button>
          <button aria-label="Restore"><svg viewBox="0 0 10 10"><path d="M1 3H7V9H1ZM3 3V1H9V7H7" /></svg></button>
          <button aria-label="Close"><svg viewBox="0 0 10 10"><path d="M1 1L9 9M9 1L1 9" /></svg></button>
        </div>
      </header>

      <nav class="menubar">
        <i class="grip"></i>
        <button v-for="m in menuParts" :key="m.join('')">{{ m[0] }}<u>{{ m[1] }}</u>{{ m[2] }}</button>
      </nav>

      <div class="dock">
        <div class="bar">
          <i class="grip"></i>
          <button class="ib wide" aria-label="Active level"><Icon n="level" class="big" /></button>
          <i class="caret"></i>
          <label class="combo level"><select aria-label="Level"><option>Default ((none))</option></select><i class="caret"></i></label>
          <div v-for="a in attrs" :key="a" class="attr" :class="{ off: a === 'shape' }">
            <button class="ib" :aria-label="a"><Icon :n="a" /></button><span>0</span><i class="caret"></i>
          </div>
        </div>
        <div class="bar">
          <i class="grip"></i>
          <div v-for="t in primary" :key="t" class="pair"><button class="ib" :aria-label="t"><Icon :n="t" /></button><i class="caret"></i></div>
          <button v-for="t in extra" :key="t" class="ib" :aria-label="t"><Icon :n="t" /></button>
        </div>
        <div class="bar">
          <i class="grip"></i>
          <button v-for="t in locks" :key="t" class="ib" :aria-label="t"><Icon :n="t" class="big" /></button>
        </div>
      </div>

      <div class="dock second">
        <div class="bar">
          <i class="grip"></i>
          <button class="ib" aria-label="Pen"><Icon n="pen" class="small" /></button>
          <label class="combo fam"><select aria-label="Family"><option></option></select><i class="caret"></i></label>
          <label class="combo part"><select aria-label="Part"><option></option></select><i class="caret"></i></label>
          <i class="sep"></i>
          <button class="ib" aria-label="Stack"><Icon n="stack" /></button>
          <label class="check"><input type="checkbox" /><span><u>C</u>ompound</span></label>
          <i class="sep"></i>
          <button class="ib" aria-label="Weight"><Icon n="equal" /></button>
          <i class="sep"></i>
          <button v-for="t in parts" :key="t" class="partbtn">{{ t }}<i class="caret"></i></button>
        </div>
      </div>

      <div class="main">
        <aside class="rail">
          <button class="railtab"><Icon n="explorer" class="small" /><span>Project Explorer</span></button>
        </aside>

        <aside class="panel">
          <div class="phead">
            <h2>Building Designer Tasks</h2>
            <i class="caret"></i>
            <button aria-label="Pin"><svg viewBox="0 0 10 10"><path d="M3 1H7V5H3ZM1.500 5.500H8.500M5 6V9" /></svg></button>
            <button aria-label="Close panel"><svg viewBox="0 0 10 10"><path class="fat" d="M1 1L9 9M9 1L1 9" /></svg></button>
          </div>
          <label class="combo task"><select aria-label="Task list"><option>Building Designer Tasks</option></select><i class="caret"></i></label>
          <div class="tools">
            <button v-for="(t, i) in main" :key="t" :class="{ on: i === 0 }" :aria-label="t">
              <Icon :n="t" /><small v-if="i < 10">{{ (i + 1) % 10 }}</small>
            </button>
          </div>
          <div class="scroll">
            <div class="content">
              <div class="arch">
                <Icon n="a_arch" class="small" /><h3>Architectural Des...</h3>
                <svg class="modes" viewBox="0 0 48 10">
                  <path d="M2 1H5V4H2ZM7 1H10V4H7ZM2 6H5V9H2ZM7 6H10V9H7Z" fill="#222" />
                  <path d="M14 1.500H22M14 5H22M14 8.500H22" stroke="#222" stroke-width="1.200" />
                  <path d="M26 2.500H34M26 7.500H34" stroke="#222" stroke-width="3" />
                  <path d="M38 7L41 4 44 7" stroke="#222" stroke-width="2" fill="none" />
                </svg>
              </div>
              <div class="rows">
                <div v-for="r in rows" :key="r.k" class="trow">
                  <b>{{ r.k }}</b>
                  <div><button v-for="n in r.i" :key="n" :aria-label="n"><Icon :n="n" /><em v-if="n === 'z6'">EPA</em></button></div>
                </div>
              </div>
              <div class="acc">
                <button v-for="t in tasks" :key="t[1]">
                  <Icon :n="t[0]" class="small" /><span>{{ t[1] }}</span>
                  <svg class="chev" viewBox="0 0 8 8"><path d="M1 2L4 5 7 2" /></svg>
                </button>
                <i class="peek"></i>
              </div>
            </div>
            <div class="sbar">
              <svg viewBox="0 0 10 10"><path d="M2 6.500L5 3.500 8 6.500" /></svg>
              <i></i>
              <svg viewBox="0 0 10 10"><path d="M2 3.500L5 6.500 8 3.500" /></svg>
            </div>
          </div>
        </aside>

        <section class="view">
          <div class="vtitle">
            <Icon n="viewIcon" class="small" /><h2>View 1 - Top, TempModel</h2>
            <div class="vbtns">
              <button aria-label="Minimize view"><svg viewBox="0 0 10 8"><path d="M2 4H8V6H2Z" /></svg></button>
              <button aria-label="Restore view"><svg viewBox="0 0 10 8"><path d="M4 1H8V5H4ZM2 3H6V7H2Z" /></svg></button>
              <button class="x" aria-label="Close view"><svg viewBox="0 0 10 8"><path class="xx" d="M3 1.500L7 6.500M7 1.500L3 6.500" /></svg></button>
            </div>
          </div>
          <div class="vtools">
            <template v-for="(g, gi) in viewTools" :key="gi">
              <i v-if="gi" class="sep"></i>
              <template v-for="(t, i) in g" :key="i">
                <i v-if="t === '>'" class="caret"></i>
                <button v-else :aria-label="t"><Icon :n="t" class="small" /></button>
              </template>
            </template>
          </div>
          <div class="stage">
            <svg class="draw">
              <defs>
                <pattern id="grid" :width="step" :height="step" patternUnits="userSpaceOnUse" x="619.5" y="217.5">
                  <rect v-for="(d, i) in dots" :key="i" :x="d[0]" :y="d[1]" width="1" height="1" fill="#565656" />
                </pattern>
              </defs>
              <rect width="100%" height="100%" fill="#000" />
              <rect width="100%" height="100%" fill="url(#grid)" />
              <g stroke="#303030">
                <line v-for="i in 21" :key="'v' + i" :x1="Math.round(30 + step * (i - 1)) + 0.5" :x2="Math.round(30 + step * (i - 1)) + 0.5" y1="0" y2="100%" />
                <line v-for="i in 13" :key="'h' + i" x1="0" x2="100%" :y1="Math.round(21 + step * (i - 1)) + 0.5" :y2="Math.round(21 + step * (i - 1)) + 0.5" />
              </g>
              <g class="green">
                <template v-for="k in green.cols" :key="k.t">
                  <line :x1="k.x" :x2="k.x" y1="13" y2="566" />
                  <circle :cx="k.x" cy="3" r="10" />
                  <text :x="k.x" y="8">{{ k.t }}</text>
                </template>
                <template v-for="k in green.rows" :key="k.t">
                  <line x1="101" x2="527" :y1="k.y" :y2="k.y" />
                  <circle cx="91" :cy="k.y" r="10" />
                  <text x="91" :y="k.y + 5">{{ k.t }}</text>
                </template>
              </g>
              <g class="red">
                <template v-for="k in red.cols" :key="k.t">
                  <line :x1="k.x" :x2="k.x" y1="183" y2="615" />
                  <circle :cx="k.x" cy="174" r="10" />
                  <text :x="k.x" y="178">{{ k.t }}</text>
                </template>
                <template v-for="k in red.rows" :key="k.t">
                  <line x1="586" x2="919" :y1="k.y" :y2="k.y" />
                  <circle cx="576" :cy="k.y" r="10" />
                  <text x="576" :y="k.y + 4">{{ k.t }}</text>
                </template>
              </g>
              <rect v-for="(q, i) in handles" :key="i" :x="q[0] - 3" :y="q[1] - 3" width="6" height="6" fill="#3f83b5" />
              <g class="axis">
                <path d="M619 566L633 583H627V600H612V583H605Z" />
                <path d="M664 610L647 624V618H630V603H647V596Z" />
                <circle cx="619" cy="610" r="7" />
                <path d="M619 603V617M612 610H626" />
                <text x="619" y="593">Y</text>
                <text x="642" y="616">X</text>
              </g>
            </svg>

            <div class="dialog">
              <div class="dtitle">
                <Icon n="app" class="small" /><h2>Grid Systems Orientation</h2>
                <button aria-label="Minimize dialog"><svg viewBox="0 0 10 10"><path d="M1 5H9" /></svg></button>
                <button class="dim" aria-label="Maximize dialog" disabled><svg viewBox="0 0 10 10"><path d="M2 2H8V8H2Z" /></svg></button>
                <button aria-label="Close dialog"><svg viewBox="0 0 10 10"><path d="M1 1L9 9M9 1L1 9" /></svg></button>
              </div>
              <div class="dbody">
                <div class="dcombo">
                  <input type="text" value="OrthogonalGrid1" aria-label="Grid system" />
                  <button aria-label="Open list"><i class="caret tiny"></i></button>
                  <ul role="listbox"><li role="option">Orthogonal</li><li role="option" class="sel">OrthogonalGrid1</li></ul>
                </div>
                <button class="act move"><Icon n="moveTo" class="small" />Move</button>
                <button class="act rotate"><Icon n="rot" class="small" />Rotate</button>
                <button class="act fin" disabled><Icon n="ok" class="small" />Finish</button>
                <button class="act"><Icon n="cancel" class="small" />Cancel</button>
              </div>
            </div>

            <div class="palette">
              <div class="ptitle">
                <Icon n="elem" class="small" /><h2>Element ...</h2>
                <button aria-label="Minimize palette"><svg viewBox="0 0 10 10"><path d="M2 5H8" /></svg></button>
                <button class="dim" aria-label="Maximize palette" disabled><svg viewBox="0 0 10 10"><path d="M2 2H8V8H2Z" /></svg></button>
                <button aria-label="Close palette"><svg viewBox="0 0 10 10"><path d="M1 1L9 9M9 1L1 9" /></svg></button>
              </div>
              <div class="pbody">
                <div class="pgrid">
                  <div><button v-for="(t, i) in palA" :key="t" :class="{ on: i === 0 }" :aria-label="t"><Icon :n="t" class="small" /></button></div>
                  <div><button v-for="(t, i) in palB" :key="t" :class="{ on: i === 0 }" :aria-label="t"><Icon :n="t" class="small" /></button></div>
                </div>
                <div class="pside">
                  <button aria-label="Clear selection"><Icon n="pNo" /></button>
                  <button aria-label="Select all"><Icon n="pSel" /></button>
                </div>
                <i class="caret"></i>
              </div>
            </div>

            <svg class="notes" viewBox="0 0 260 75">
              <g fill="none" stroke="#f20d14" stroke-width="5">
                <rect x="55.500" y="17.500" width="102" height="49" />
                <rect x="162.500" y="17.500" width="40" height="29" />
              </g>
              <g fill="#f80404">
                <path d="M49 34L24 47A15 15 0 1 1 24 21Z" />
                <path d="M211 36L235 23A15 15 0 1 1 235 49Z" />
              </g>
              <g class="num"><text x="20" y="39">1</text><text x="240" y="41">2</text></g>
            </svg>
          </div>
        </section>
      </div>

      <div class="dock bottom">
        <div class="bar">
          <i class="grip"></i>
          <button class="ib" aria-label="Back"><Icon n="back" /></button><i class="caret"></i>
          <button class="ib" aria-label="Forward"><Icon n="fwd" /></button><i class="caret gray"></i>
          <button class="ib" aria-label="Mode"><Icon n="mode" /></button><i class="caret"></i>
          <label class="combo model"><Icon n="model" class="small" /><select aria-label="Model"><option>TempModel Temp</option></select><i class="caret"></i></label>
          <i class="sep"></i>
          <button class="ib" aria-label="Windows"><Icon n="windows" /></button>
          <i class="sep"></i>
          <div class="vnums"><button v-for="n in 8" :key="n" :class="{ on: n === 1 }">{{ n }}</button></div>
        </div>
        <div class="bar">
          <i class="grip"></i>
          <button class="ib" aria-label="Database"><Icon n="db" class="big" /></button>
          <i class="sep"></i>
          <label class="combo none"><Icon n="acs" class="small" /><select aria-label="Coordinate system"><option>None</option></select><i class="caret"></i></label>
          <input class="angle" type="text" value="0.00°" aria-label="Angle" />
          <svg class="vee" viewBox="0 0 10 10"><path d="M2 4L5 7 8 4" /></svg>
          <button class="ib" aria-label="Plane"><Icon n="gray1" /></button>
          <button class="ib" aria-label="Snap"><Icon n="gray2" /></button><i class="caret gray"></i>
          <i class="sep"></i>
          <button class="ib" aria-label="Groups"><Icon n="ch1" class="big" /></button>
          <button class="ib next" aria-label="Checked groups"><Icon n="ch2" class="big" /></button><i class="caret"></i>
          <button class="ib" aria-label="Group model"><Icon n="ch3" class="big" /></button><i class="caret"></i>
        </div>
        <div class="bar coords">
          <i class="grip"></i>
          <label v-for="k in coords" :key="k[0]"><b>{{ k[0] }}</b><input type="text" :value="k[1]" /></label>
        </div>
      </div>

      <footer class="status">
        <p>Element Selection &gt; Identify element to add to set</p>
        <i class="grip"></i>
        <i class="well"></i>
        <span class="cell n"><Icon n="snap" class="small" /></span>
        <span class="cell lvl"><Icon n="padlock" class="small" />Default ((none))</span>
        <span class="cell cnt"><Icon n="arrow" class="small" />: 1</span>
        <span class="cell n"></span><span class="cell n"></span><span class="cell n"></span>
        <span class="cell n"><Icon n="doc" class="small" /></span><span class="cell n"></span><span class="cell n"></span>
        <span class="cell n"><Icon n="disk" class="small" /></span><span class="cell n"><Icon n="person" class="small" /></span>
      </footer>
    </div>
  </div>
</template>

<style>
body { background: #fff; overflow: hidden; }
</style>

<style scoped>
.page {
  --ms: Roboto, "Liberation Sans", sans-serif;
  --seg: Lato, "Open Sans", sans-serif;
  --ver: "Open Sans", "Noto Sans", sans-serif;
  box-sizing: border-box;
  display: flex;
  height: 100vh;
  padding: 0 10px 9px 0;
  font: 7px/10px var(--ms);
  color: #15151c;
}
.page * { box-sizing: border-box; }
.window { flex: 1; min-width: 0; display: flex; flex-direction: column; background: #f0f0f0; box-shadow: 4px 5px 5px #777; }
button, input, select { font: inherit; color: inherit; margin: 0; padding: 0; border: 0; background: none; border-radius: 0; outline: 0; }
h1, h2, h3, p, ul { margin: 0; padding: 0; font: inherit; list-style: none; }
i, em { font-style: normal; }
.ic { width: 13px; height: 13px; flex: none; display: block; }
.ic.big { width: 15px; height: 15px; }
.ic.small { width: 11px; height: 11px; }
.ib { width: 18px; height: 18px; display: grid; place-items: center; flex: none; }
.ib.wide { margin-left: 5px; }
.caret { flex: none; width: 10px; height: 3px; background: linear-gradient(#111, #111) no-repeat center / 6px 3px; clip-path: polygon(2px 0, 8px 0, 5px 3px); }
.caret.gray { opacity: 0.45; }
.grip { flex: none; width: 2px; height: 12px; margin: 0 1px; background: repeating-linear-gradient(#9a9a9a 0 1px, transparent 1px 3px); }
.sep { flex: none; width: 1px; height: 16px; margin: 0 1px; background: #bdbdbd; }

.titlebar { display: flex; align-items: center; gap: 4px; height: 15px; background: #fff; font: 8px/13px var(--seg); }
.titlebar .ic { width: 11px; height: 11px; }
.titlebar h1 { flex: 1; }
.caption { display: flex; gap: 20px; padding-right: 11px; }
.caption button { width: 10px; height: 10px; }
.caption svg, .dtitle button svg, .ptitle button svg { width: 8px; height: 8px; display: block; margin: auto; }
.caption path, .dtitle button path, .ptitle button path { fill: none; stroke: #333; }

.menubar { display: flex; align-items: center; height: 15px; background: #efefef; }
.menubar .grip { height: 6px; margin-right: 7px; }
.menubar button { margin-right: 8px; }

.dock { display: flex; gap: 2px; height: 22px; background: #efefef; }
.bar { display: flex; align-items: center; padding-right: 1px; background: linear-gradient(#fdfdfd, #e2e2e2); border-radius: 2px; box-shadow: 1px 1px 1px #cfcfcf; }
.dock.second { height: 21px; padding-top: 1px; }
.combo { display: flex; align-items: center; height: 13px; border: 1px solid #bdbdbd; background: #e6e6e6; padding: 0 1px; }
.combo select { flex: 1; min-width: 0; height: 11px; appearance: none; }
.combo.level { width: 129px; margin: 0 1px 0 2px; }
.combo.fam { width: 47px; margin-right: 5px; }
.combo.part { width: 95px; margin-right: 1px; }
.attr { display: flex; align-items: center; width: 46px; border-left: 1px solid #d0d0d0; }
.attr .ib { width: 22px; }
.attr span { width: 10px; text-align: center; }
.attr.off { color: #999; }
.attr.off .caret { opacity: 0.5; }
.attr .caret { margin-left: 2px; }
.pair { display: flex; align-items: center; width: 28px; }
.check { display: flex; align-items: center; gap: 2px; margin-left: 4px; width: 48px; }
.check input { appearance: none; width: 9px; height: 9px; background: #fff; border: 1px solid #777; }
.partbtn { display: flex; align-items: center; justify-content: space-between; width: 47px; height: 13px; padding-left: 1px; margin: 0 2px; border: 1px solid #bdbdbd; background: #e9e9e9; white-space: nowrap; }

.main { flex: 1; min-height: 0; display: flex; }
.rail { flex: none; width: 15px; background: #ededed; border-top: 1px solid #ccc; }
.railtab { display: flex; flex-direction: column; align-items: center; gap: 2px; width: 13px; height: 76px; margin: 4px 0 0 1px; padding-top: 3px; border: 1px solid #aaa; border-left: 0; background: #fafafa; font: 8px/11px var(--seg); }
.railtab span { writing-mode: vertical-rl; }
.panel { flex: none; width: 162px; display: flex; flex-direction: column; background: #f0f0f0; border-left: 1px solid #d5d5d5; }
.phead { display: flex; align-items: center; height: 14px; padding-left: 1px; background: #dce3ec; font: 8px/13px var(--seg); }
.phead h2 { flex: 1; }
.phead button { width: 10px; height: 10px; }
.phead svg { width: 8px; height: 8px; display: block; margin: auto; }
.phead path { fill: none; stroke: #222; stroke-width: 1.300; }
.phead .fat { stroke-width: 2; }
.combo.task { flex: none; height: 16px; margin: 2px 1px 0; padding-left: 4px; border: 1px solid #9a9a9a; border-radius: 2px; background: #fff; font: 8px/12px var(--ver); }
.combo.task select { height: 14px; border-right: 1px solid #bbb; }
.tools { display: grid; grid-template-columns: repeat(8, 18px); grid-auto-rows: 19px; margin-left: 1px; padding: 6px 4px 3px; background: #fff; }
.tools button { position: relative; display: grid; place-items: center; }
.tools button.on { background: linear-gradient(#ffd98e, #f8b34c); box-shadow: inset 0 0 0 1px #b98b42; }
.tools small { position: absolute; left: 1px; bottom: 0; font: 8px/8px var(--ms); color: #555; background: #fff8; }
.scroll { flex: 1; min-height: 0; display: flex; }
.content { flex: 1; min-width: 0; overflow: hidden; background: #f0f0f0; }
.arch { display: flex; align-items: center; height: 15px; padding-left: 5px; background: linear-gradient(#eaf6ff, #c3e2f7); }
.arch h3 { flex: 1; margin-left: 3px; font: bold 8px/14px var(--ver); white-space: nowrap; }
.modes { width: 48px; height: 10px; }
.rows { display: grid; grid-auto-rows: 1fr; height: 217px; margin-left: 1px; padding: 2px 3px 1px 4px; background: #fff; }
.trow { display: flex; }
.trow > b { display: grid; place-items: center; width: 9px; font: 8px/10px var(--seg); color: #777; background: #eceaf2; }
.trow > div { display: flex; align-items: center; flex: 1; border-bottom: 1px solid #c9c9c9; padding-left: 1px; }
.trow:last-child > div { border: 0; }
.trow button { position: relative; width: 18px; height: 18px; display: grid; place-items: center; }
.trow .ic { width: 15px; height: 15px; }
.trow em { position: absolute; left: 1px; bottom: 0; width: 16px; background: #8d4593; color: #fff; font: bold 6px/6px var(--ms); }
.acc { display: grid; grid-auto-rows: 16px; gap: 2px; padding: 4px 2px; }
.acc button { display: flex; align-items: center; gap: 3px; padding: 0 4px 0 2px; border: 1px solid #b9b9b9; border-radius: 3px; background: linear-gradient(#f3f3f3, #d6d6d6); font: 8px/12px var(--ver); text-align: left; white-space: nowrap; color: #231a2b; }
.acc span { flex: 1; }
.chev { width: 8px; height: 8px; }
.chev path { fill: none; stroke: #222; stroke-width: 2.500; }
.peek { border-top: 1px solid #b9b9b9; }
.sbar { flex: none; display: flex; flex-direction: column; align-items: center; width: 11px; background: #f0f0f0; }
.sbar svg { width: 10px; height: 10px; }
.sbar path { fill: none; stroke: #333; stroke-width: 1.500; }
.sbar i { width: 9px; flex: 1; margin-bottom: 36px; background: #cdcdcd; }

.view { flex: 1; min-width: 0; display: flex; flex-direction: column; border-left: 4px solid #a9a9d6; border-top: 1px solid #7f8ea0; }
.vtitle { display: flex; align-items: center; gap: 4px; height: 20px; padding-left: 2px; padding-top: 4px; background: linear-gradient(#9ab8d8, #b7cfe8); font: 8px/12px var(--seg); }
.vtitle h2 { flex: 1; }
.vbtns { display: flex; gap: 2px; padding-right: 1px; }
.vbtns button { width: 20px; height: 11px; display: grid; place-items: center; border: 1px solid #64809f; border-radius: 2px; background: linear-gradient(#dbe8f5, #a9c4e0); }
.vbtns .x { border-color: #7a2a22; background: linear-gradient(#e59080, #c33a24); }
.vbtns svg { width: 10px; height: 8px; }
.vbtns path { fill: #fff; stroke: #555; stroke-width: 0.800; }
.vbtns .xx { stroke: #fff; stroke-width: 1.800; }
.vtools { display: flex; align-items: center; height: 15px; padding-left: 1px; background: #f2f2f2; }
.vtools button { width: 14px; height: 14px; display: grid; place-items: center; }
.vtools .caret { margin: 0; }
.vtools .sep { height: 11px; margin: 0 4px; }
.stage { flex: 1; min-height: 0; position: relative; overflow: hidden; background: #000; }
.draw { position: absolute; inset: 0; width: 100%; height: 100%; }
.green line, .green circle { stroke: #05e805; stroke-width: 2; fill: none; }
.green text { fill: #05e805; font: 13px "Liberation Sans", sans-serif; text-anchor: middle; }
.red line { stroke: #ff1010; stroke-width: 3; }
.red circle { stroke: #ff0000; stroke-width: 3; fill: none; }
.red text { fill: #ff0000; font: 12px "Liberation Sans", sans-serif; text-anchor: middle; }
.axis path, .axis circle { fill: #60606088; stroke: #8a8a8a; stroke-width: 1; }
.axis text { fill: #a5a5a5; font: 15px "Liberation Sans", sans-serif; text-anchor: middle; }

.dialog { position: absolute; left: 227px; top: 77px; width: 274px; border: 1px solid #2f86d0; background: #f0f0f0; font: 8px/10px var(--seg); }
.dtitle { display: flex; align-items: center; height: 19px; padding: 0 5px; background: #fff; }
.dtitle h2 { flex: 1; margin-left: 2px; }
.dtitle button { width: 18px; margin-left: 11px; }
.dim { opacity: 0.3; }
.dbody { display: flex; align-items: center; height: 20px; padding: 0 2px; }
.dcombo { position: relative; display: flex; align-items: center; width: 95px; height: 15px; border: 1px solid #5d94c8; background: #fff; }
.dcombo input { width: 60px; height: 10px; background: #3390e8; color: #fff; outline: 1px solid #d99a4a; outline-offset: 0; }
.dcombo button { margin-left: auto; width: 8px; height: 13px; background: #8cc0f5; overflow: hidden; }
.caret.tiny { display: block; margin-left: -1px; }
.dcombo ul { position: absolute; left: -1px; top: 14px; width: 95px; border: 1px solid #666; background: #fff; }
.dcombo li.sel { background: #3390e8; color: #fff; }
.act { display: flex; align-items: center; gap: 2px; white-space: nowrap; }
.act.move { margin-left: 10px; }
.act.rotate { margin-left: 8px; }
.act.fin { margin-left: 8px; color: #888; }
.act.fin + .act { margin-left: 5px; }

.palette { position: absolute; left: 783px; top: 18px; width: 144px; border: 1px solid #ddd; background: #f0f0f0; font: 8px/10px var(--seg); }
.ptitle { display: flex; align-items: center; height: 16px; padding: 0 4px 0 1px; background: #fff; color: #888; }
.ptitle h2 { flex: 1; margin-left: 2px; white-space: nowrap; }
.ptitle button { width: 20px; margin-left: 9px; }
.ptitle h2 + button { margin-left: 0; }
.ptitle path { stroke: #888; }
.pbody { display: flex; height: 49px; padding: 4px 13px; }
.pgrid > div { display: flex; align-items: center; height: 18px; width: 71px; padding-left: 2px; border-top: 1px solid #999; border-left: 1px solid #aaa; }
.pgrid button { width: 14px; height: 14px; display: grid; place-items: center; }
.pgrid .on { background: #f9c777; box-shadow: 0 0 0 1px #b98b42; }
.pside { margin-left: 9px; }
.pside button { display: grid; place-items: center; width: 18px; height: 18px; }
.pbody > .caret { width: 10px; margin: 29px 0 0 7px; }
.notes { position: absolute; left: 172px; top: 77px; width: 260px; height: 75px; pointer-events: none; }
.num { fill: #fff; font: 15px "Liberation Sans", sans-serif; text-anchor: middle; }

.dock.bottom { gap: 4px; height: 22px; border-top: 1px solid #fff; }
.combo.model { width: 86px; padding: 0; gap: 1px; font: 7px/10px var(--ms); }
.vnums { display: flex; }
.vnums button { width: 9px; height: 14px; border-right: 1px solid #666; font: bold 8px/12px var(--ms); }
.vnums .on { background: #f9c170; box-shadow: inset 0 0 0 1px #c89344; }
.combo.none { width: 249px; margin-left: 2px; gap: 2px; }
.angle { width: 38px; height: 12px; margin-left: 2px; padding-left: 3px; border: 1px solid #a9c4e4; color: #777; background: #f6f6f6; }
.vee { width: 12px; height: 10px; }
.vee path { fill: none; stroke: #aaa; }
.ib.next { margin-left: 4px; }
.coords b { width: 14px; text-align: center; font: bold 10px/14px var(--ver); }
.coords label { display: flex; align-items: center; padding-right: 3px; }
.coords label + label { padding-left: 1px; }
.coords input { width: 59px; height: 13px; padding-left: 2px; border: 1px solid #bbb; background: #fff; color: #777; }
.status { display: flex; align-items: center; height: 16px; border-top: 1px solid #c8c8c8; }
.status p { width: 252px; padding-left: 2px; }
.well { width: 16px; height: 14px; margin-right: auto; border-left: 1px solid #aaa; background: #ececec; }
.cell { display: flex; align-items: center; gap: 5px; height: 14px; border-left: 1px solid #b5b5b5; padding: 0 3px; }
.cell.n { width: 18px; }
.cell.lvl { width: 95px; }
.cell.cnt { width: 67px; }
</style>
